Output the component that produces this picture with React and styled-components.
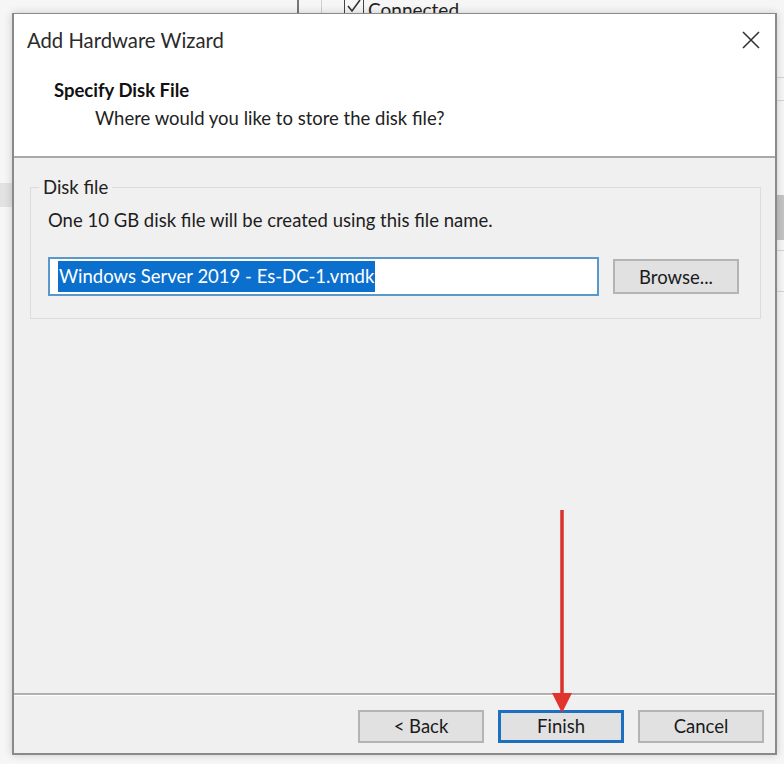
import React from "react";
import styled, { createGlobalStyle } from "styled-components";

const GlobalStyle = createGlobalStyle`
  html, body {
    margin: 0;
    padding: 0;
    background: #f6f6f6;
  }
  body {
    font-family: "Segoe UI", Lato, "Liberation Sans", sans-serif;
    color: #1b1b1b;
  }
`;

const Page = styled.div`
  width: 784px;
  height: 764px;
  display: flex;
  flex-direction: column;
  background: #f6f6f6;
  overflow: hidden;
`;

const TopStrip = styled.div`
  height: 13px;
  display: flex;
  align-items: flex-end;
  overflow: hidden;
  padding-left: 297px;
`;

const VLine = styled.div`
  width: ${p => p.$w || 1}px;
  height: 100%;
  background: ${p => p.$color || "#8c8c8c"};
  margin-right: ${p => p.$gap || 0}px;
`;

const BackCheck = styled.div`
  display: flex;
  align-items: flex-start;
  height: 13px;
  gap: 4px;
  font-size: 19px;
  line-height: 19px;
  color: #222;
`;

const CheckBox = styled.div`
  width: 18px;
  height: 18px;
  margin-top: -4px;
  border: 1px solid #444;
  display: flex;
  align-items: center;
  justify-content: center;
`;

const Middle = styled.div`
  display: flex;
  height: 742px;
`;

const LeftEdge = styled.div`
  width: 12px;
  display: flex;
  flex-direction: column;
  padding-top: 170px;
`;

const EdgeBand = styled.div`
  height: ${p => p.$h}px;
  background: ${p => p.$color};
  margin-bottom: ${p => p.$gap || 0}px;
`;

const RightEdge = styled.div`
  flex: 1;
  display: flex;
  flex-direction: column;
  padding-top: 64px;
`;

const Dialog = styled.div`
  position: relative;
  width: 765px;
  display: flex;
  flex-direction: column;
  border: 1px solid #8a8a8a;
  border-width: 1px 2px 2px 2px;
  box-sizing: border-box;
  background: #f0f0f0;
  box-shadow: 0 0 8px rgba(0, 0, 0, 0.18);
`;

const Header = styled.div`
  background: #ffffff;
  height: 142px;
  display: flex;
  flex-direction: column;
  border-bottom: 2px solid #a9a9a9;
`;

const TitleBar = styled.div`
  display: flex;
  align-items: center;
  justify-content: space-between;
  height: 52px;
  padding: 0 14px 0 13px;
`;

const Title = styled.div`
  font-size: 20.3px;
  color: #2a2a2a;
`;

const CloseIcon = styled.svg`
  width: 20px;
  height: 20px;
`;

const Heading = styled.div`
  padding: 12px 0 0 40px;
  display: flex;
  flex-direction: column;
  gap: 4px;
`;

const HeadingTitle = styled.div`
  font-weight: 700;
  font-size: 18.5px;
  line-height: 24px;
  color: #111;
`;

const HeadingSub = styled.div`
  font-size: 18.5px;
  line-height: 24px;
  padding-left: 41px;
  color: #222;
`;

const Body = styled.div`
  flex: 1;
  padding: 29px 14px 0 16px;
  background: #f0f0f0;
`;

const GroupBox = styled.div`
  position: relative;
  height: 132px;
  box-sizing: border-box;
  border: 1px solid #dcdcdc;
  padding: 20px 20px 0 17px;
  display: flex;
  flex-direction: column;
`;

const Legend = styled.div`
  position: absolute;
  top: -12px;
  left: 8px;
  padding: 0 4px;
  background: #f0f0f0;
  font-size: 18.5px;
  line-height: 22px;
  color: #222;
`;

const Description = styled.div`
  font-size: 18.5px;
  line-height: 24px;
  color: #1d1d1d;
`;

const FileRow = styled.div`
  display: flex;
  align-items: center;
  margin-top: 25px;
  gap: 14px;
`;

const FileInput = styled.div`
  width: 551px;
  height: 39px;
  box-sizing: border-box;
  border: 2px solid #5a98cc;
  background: #fff;
  display: flex;
  align-items: center;
  padding-left: 8px;
`;

const Selected = styled.span`
  background: #0b6fce;
  color: #fff;
  font-size: 18.5px;
  line-height: 31px;
  padding: 0 1px;
`;

const Button = styled.div`
  width: ${p => p.$w || 126}px;
  height: ${p => p.$h || 33}px;
  box-sizing: border-box;
  background: #e1e1e1;
  border: ${p => (p.$primary ? "3px solid #1f6fc0" : "2px solid #b4b4b4")};
  display: flex;
  align-items: center;
  justify-content: center;
  font-size: 18.5px;
  color: #1b1b1b;
`;

const Footer = styled.div`
  height: 60px;
  border-top: 2px solid #b0b0b0;
  box-shadow: inset 0 1px 0 #ffffff;
  display: flex;
  align-items: center;
  justify-content: flex-end;
  gap: 14px;
  padding-right: 11px;
  padding-top: 4px;
  box-sizing: border-box;
`;

const Arrow = styled.svg`
  position: absolute;
  left: 536px;
  top: 494px;
  width: 24px;
  height: 207px;
`;

export default function App() {
  return (
    <Page>
      <GlobalStyle />
      <TopStrip>
        <VLine $w={2} $color="#777" $gap={22} />
        <VLine $w={1} $color="#cfcfcf" $gap={22} />
        <BackCheck>
          <CheckBox>
            <svg width="16" height="16" viewBox="0 0 16 16">
              <path d="M2 8 L6 13 L14 2" stroke="#333" strokeWidth="1.6" fill="none" />
            </svg>
          </CheckBox>
          <span>Connected</span>
        </BackCheck>
      </TopStrip>
      <Middle>
        <LeftEdge>
          <EdgeBand $h={24} $color="#e2e2e2" />
        </LeftEdge>
        <Dialog>
          <Header>
            <TitleBar>
              <Title>Add Hardware Wizard</Title>
              <CloseIcon viewBox="0 0 20 20">
                <path d="M2 2 L18 18 M18 2 L2 18" stroke="#333" strokeWidth="1.6" />
              </CloseIcon>
            </TitleBar>
            <Heading>
              <HeadingTitle>Specify Disk File</HeadingTitle>
              <HeadingSub>Where would you like to store the disk file?</HeadingSub>
            </Heading>
          </Header>
          <Body>
            <GroupBox>
              <Legend>Disk file</Legend>
              <Description>One 10 GB disk file will be created using this file name.</Description>
              <FileRow>
                <FileInput>
                  <Selected>Windows Server 2019 - Es-DC-1.vmdk</Selected>
                </FileInput>
                <Button $w={126} $h={35}>Browse...</Button>
              </FileRow>
            </GroupBox>
          </Body>
          <Footer>
            <Button>&lt; Back</Button>
            <Button $primary>Finish</Button>
            <Button>Cancel</Button>
          </Footer>
          <Arrow viewBox="0 0 24 207">
            <line x1="12" y1="2" x2="12" y2="188" stroke="#d9312b" strokeWidth="3.5" />
            <polygon points="2,185 22,185 12,205" fill="#e2342c" />
          </Arrow>
        </Dialog>
        <RightEdge>
          <EdgeBand $h={1} $color="#d4d4d4" $gap={22} />
          <EdgeBand $h={1} $color="#d4d4d4" $gap={94} />
          <EdgeBand $h={45} $color="#c4c4c4" $gap={10} />
          <EdgeBand $h={1} $color="#d4d4d4" $gap={40} />
          <EdgeBand $h={1} $color="#d4d4d4" $gap={50} />
        </RightEdge>
      </Middle>
    </Page>
  );
}
